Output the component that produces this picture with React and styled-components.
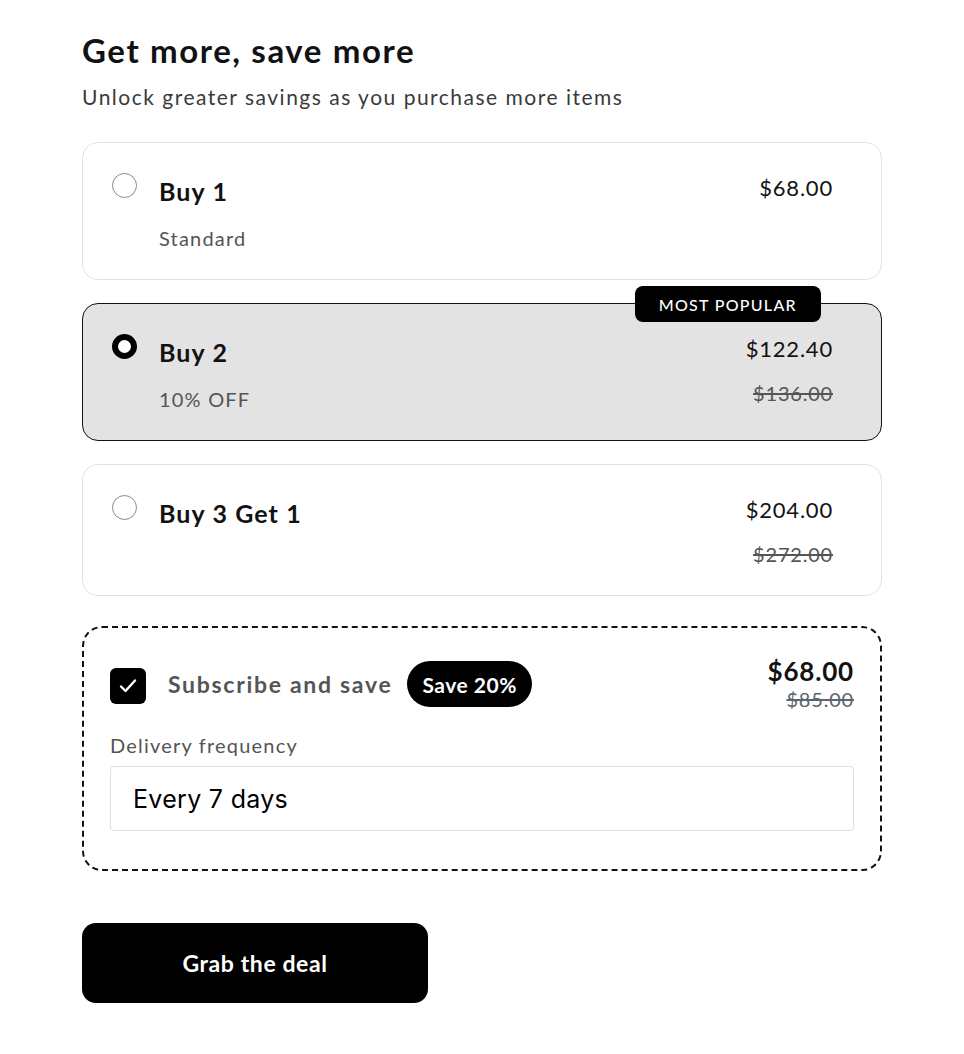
import React from "react";
import styled, { createGlobalStyle } from "styled-components";

const Global = createGlobalStyle`
  * { box-sizing: border-box; }
  body { margin: 0; background: #fff; font-family: "Lato", "Liberation Sans", sans-serif; color: #121212; }
`;

const Page = styled.div`
  width: 800px;
  margin: 0 auto;
  padding: 30px 0 40px;
`;

const Heading = styled.h2`
  margin: 0;
  font-size: 33px;
  line-height: 40px;
  font-weight: 700;
  letter-spacing: 1.6px;
`;

const Sub = styled.p`
  margin: 12px 0 0;
  font-size: 21px;
  line-height: 30px;
  letter-spacing: 1.5px;
  color: #3a3a3a;
`;

const List = styled.div`
  display: flex;
  flex-direction: column;
  gap: 23px;
  margin-top: 30px;
`;

const Card = styled.div`
  position: relative;
  display: flex;
  align-items: flex-start;
  padding: 27px 48px 26px 29px;
  border: 1px solid ${(p) => (p.$active ? "#121212" : "#e2e2e2")};
  background: ${(p) => (p.$active ? "#e3e3e3" : "#fff")};
  border-radius: 16px;
`;

const Radio = styled.span`
  flex: none;
  width: 25px;
  height: 25px;
  margin-top: 3px;
  border-radius: 50%;
  border: ${(p) => (p.$on ? "6.5px solid #000" : "1px solid #8a8a8a")};
  background: #fff;
`;

const Info = styled.div`
  flex: 1;
  margin-left: 22px;
`;

const Title = styled.div`
  font-size: 25px;
  line-height: 42px;
  font-weight: 700;
  letter-spacing: 1.1px;
`;

const Note = styled.div`
  margin-top: 11px;
  font-size: 20px;
  line-height: 30px;
  letter-spacing: 1.2px;
  color: #555;
`;

const Prices = styled.div`
  display: flex;
  flex-direction: column;
  align-items: flex-end;
`;

const Price = styled.div`
  font-size: 22px;
  line-height: 36px;
  letter-spacing: 0.8px;
`;

const Old = styled.div`
  margin-top: 11px;
  font-size: 20px;
  line-height: 30px;
  letter-spacing: 0.8px;
  color: #555;
  text-decoration: line-through;
`;

const Badge = styled.span`
  position: absolute;
  top: -18px;
  right: 60px;
  height: 36px;
  padding: 0 24px;
  display: flex;
  align-items: center;
  background: #000;
  color: #fff;
  border-radius: 8px;
  font-size: 16px;
  font-weight: 500;
  letter-spacing: 1.3px;
`;

const SubBox = styled.div`
  margin-top: 30px;
  border: 2px dashed #121212;
  border-radius: 20px;
  padding: 33px 26px 38px 26px;
`;

const SubTop = styled.div`
  display: flex;
  align-items: flex-start;
`;

const SubLeft = styled.div`
  flex: 1;
  display: flex;
  align-items: center;
  height: 46px;
`;

const Check = styled.span`
  flex: none;
  width: 36px;
  height: 36px;
  margin-top: 3px;
  border-radius: 6px;
  background: #000;
  display: flex;
  align-items: center;
  justify-content: center;
`;

const SubLabel = styled.span`
  margin-left: 22px;
  font-size: 23px;
  font-weight: 700;
  letter-spacing: 1.7px;
  color: #555;
`;

const Pill = styled.span`
  margin-left: 15px;
  height: 46px;
  padding: 0 15px;
  border-radius: 23px;
  background: #000;
  color: #fff;
  display: flex;
  align-items: center;
  font-size: 21px;
  font-weight: 700;
  letter-spacing: 0.5px;
`;

const SubPrices = styled.div`
  display: flex;
  flex-direction: column;
  align-items: flex-end;
  margin-top: -5px;
`;

const SubPrice = styled.div`
  font-size: 26px;
  line-height: 30px;
  font-weight: 700;
  letter-spacing: 0.8px;
`;

const SubOld = styled.div`
  font-size: 20px;
  line-height: 26px;
  letter-spacing: 0.8px;
  color: #5c6670;
  text-decoration: line-through;
`;

const FieldLabel = styled.div`
  margin-top: 18px;
  font-size: 20px;
  line-height: 30px;
  letter-spacing: 1.2px;
  color: #555;
`;

const Select = styled.div`
  margin-top: 6px;
  height: 65px;
  border: 1px solid #dedede;
  border-radius: 4px;
  padding: 0 22px;
  display: flex;
  align-items: center;
  font-family: "Inter", "Liberation Sans", sans-serif;
  font-size: 25px;
  letter-spacing: 0.3px;
  color: #000;
`;

const Button = styled.button`
  margin-top: 52px;
  width: 346px;
  height: 80px;
  border: none;
  border-radius: 14px;
  background: #000;
  color: #fff;
  font-family: inherit;
  font-size: 23px;
  font-weight: 700;
  letter-spacing: 0.6px;
  cursor: pointer;
`;

const options = [
  { title: "Buy 1", note: "Standard", price: "$68.00" },
  { title: "Buy 2", note: "10% OFF", price: "$122.40", old: "$136.00", active: true, badge: "MOST POPULAR" },
  { title: "Buy 3 Get 1", price: "$204.00", old: "$272.00" },
];

export default function App() {
  return (
    <>
      <Global />
      <Page>
        <Heading>Get more, save more</Heading>
        <Sub>Unlock greater savings as you purchase more items</Sub>
        <List>
          {options.map((o) => (
            <Card key={o.title} $active={o.active}>
              {o.badge && <Badge>{o.badge}</Badge>}
              <Radio $on={o.active} />
              <Info>
                <Title>{o.title}</Title>
                {o.note && <Note>{o.note}</Note>}
              </Info>
              <Prices>
                <Price>{o.price}</Price>
                {o.old && <Old>{o.old}</Old>}
              </Prices>
            </Card>
          ))}
        </List>
        <SubBox>
          <SubTop>
            <SubLeft>
              <Check>
                <svg width="24" height="24" viewBox="0 0 24 24" fill="none">
                  <path d="M5 12.5l4.5 4.5 9.5-10.5" stroke="#fff" strokeWidth="2.4" strokeLinecap="round" strokeLinejoin="round" />
                </svg>
              </Check>
              <SubLabel>Subscribe and save</SubLabel>
              <Pill>Save 20%</Pill>
            </SubLeft>
            <SubPrices>
              <SubPrice>$68.00</SubPrice>
              <SubOld>$85.00</SubOld>
            </SubPrices>
          </SubTop>
          <FieldLabel>Delivery frequency</FieldLabel>
          <Select>Every 7 days</Select>
        </SubBox>
        <Button>Grab the deal</Button>
      </Page>
    </>
  );
}
